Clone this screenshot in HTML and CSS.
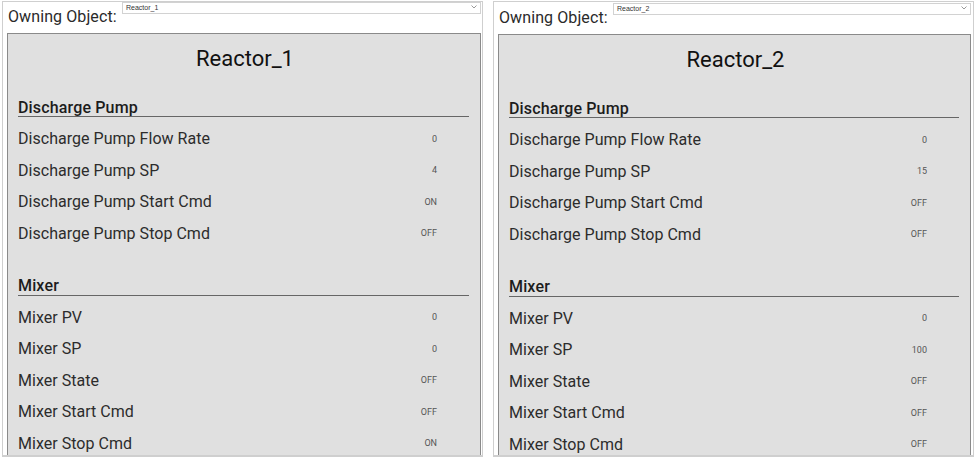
FILE: index.html
```html
<!DOCTYPE html>
<html lang="en">
<head>
<meta charset="utf-8">
<title>Reactors</title>
<link rel="stylesheet" href="styles.css">
</head>
<body>
<div class="page">
  <section class="frame frame-left">
    <header class="owner">
      <span class="owner-label">Owning Object:</span>
      <div class="select"><span>Reactor_1</span><svg class="chev" width="6" height="4" viewBox="0 0 6 4"><path d="M0.5 0.5 3 3 5.5 0.5" fill="none" stroke="#999" stroke-width="1"/></svg></div>
    </header>
    <div class="panel">
      <h1 class="title">Reactor_1</h1>
      <h2 class="group">Discharge Pump</h2>
      <div class="row"><span>Discharge Pump Flow Rate</span><b>0</b></div>
      <div class="row"><span>Discharge Pump SP</span><b>4</b></div>
      <div class="row"><span>Discharge Pump Start Cmd</span><b>ON</b></div>
      <div class="row"><span>Discharge Pump Stop Cmd</span><b>OFF</b></div>
      <h2 class="group group-next">Mixer</h2>
      <div class="row"><span>Mixer PV</span><b>0</b></div>
      <div class="row"><span>Mixer SP</span><b>0</b></div>
      <div class="row"><span>Mixer State</span><b>OFF</b></div>
      <div class="row"><span>Mixer Start Cmd</span><b>OFF</b></div>
      <div class="row"><span>Mixer Stop Cmd</span><b>ON</b></div>
    </div>
  </section>
  <section class="frame frame-right">
    <header class="owner">
      <span class="owner-label">Owning Object:</span>
      <div class="select"><span>Reactor_2</span><svg class="chev" width="6" height="4" viewBox="0 0 6 4"><path d="M0.5 0.5 3 3 5.5 0.5" fill="none" stroke="#999" stroke-width="1"/></svg></div>
    </header>
    <div class="panel">
      <h1 class="title">Reactor_2</h1>
      <h2 class="group">Discharge Pump</h2>
      <div class="row"><span>Discharge Pump Flow Rate</span><b>0</b></div>
      <div class="row"><span>Discharge Pump SP</span><b>15</b></div>
      <div class="row"><span>Discharge Pump Start Cmd</span><b>OFF</b></div>
      <div class="row"><span>Discharge Pump Stop Cmd</span><b>OFF</b></div>
      <h2 class="group group-next">Mixer</h2>
      <div class="row"><span>Mixer PV</span><b>0</b></div>
      <div class="row"><span>Mixer SP</span><b>100</b></div>
      <div class="row"><span>Mixer State</span><b>OFF</b></div>
      <div class="row"><span>Mixer Start Cmd</span><b>OFF</b></div>
      <div class="row"><span>Mixer Stop Cmd</span><b>OFF</b></div>
    </div>
  </section>
</div>
</body>
</html>
```
FILE: styles.css
```css
html, body { margin: 0; padding: 0; background: #fff; }
body { width: 975px; height: 458px; overflow: hidden; font-family: "Roboto", "Liberation Sans", sans-serif; }
.page { display: flex; gap: 10px; height: 458px; padding: 1px 0 0 2px; box-sizing: border-box; }
.frame { flex: none; width: 481px; height: 456px; box-sizing: border-box; border: 1px solid #cfcfcf; border-bottom: 2px solid #cfcfcf; padding: 0 1px 0 4px; overflow: hidden; }
.frame-right { padding-top: 1px; padding-right: 2px; }
.owner { display: flex; height: 31px; }
.owner-label { width: 114px; padding: 5px 0 0 1px; font-size: 16px; line-height: 20px; white-space: nowrap; color: #2a2a2a; letter-spacing: .1px; }
.select { flex: 1; height: 12px; box-sizing: border-box; border: 1px solid #d2d2d2; display: flex; justify-content: space-between; align-items: center; padding: 0 3px 2px 3px; font: 7px "Liberation Sans", sans-serif; color: #333; background: #fff; }
.panel { height: 430px; box-sizing: border-box; border: 1px solid #8a8a8a; background: #e0e0e0; padding: 0 11px 0 10px; overflow: hidden; }
.title { margin: 10px 0 0; padding-left: 3px; font-size: 22px; line-height: 30px; font-weight: 400; text-align: center; color: #111; }
.group { margin: 26px 0 0; font-size: 16px; line-height: 16px; font-weight: 500; letter-spacing: .15px; color: #1c1c1c; border-bottom: 1px solid #666; }
.group-next { margin-top: 29px; padding-bottom: 1px; }
.row { display: flex; justify-content: space-between; align-items: center; height: 31.5px; font-size: 16px; letter-spacing: .03px; color: #2c2c2c; }
.group + .row { margin-top: 6px; }
.group-next + .row { margin-top: 5.5px; }
.row b { width: 40px; padding-right: 32px; text-align: right; font-weight: 400; font-size: 9px; letter-spacing: 0; color: #555; }
.chev { flex: none; }
```
